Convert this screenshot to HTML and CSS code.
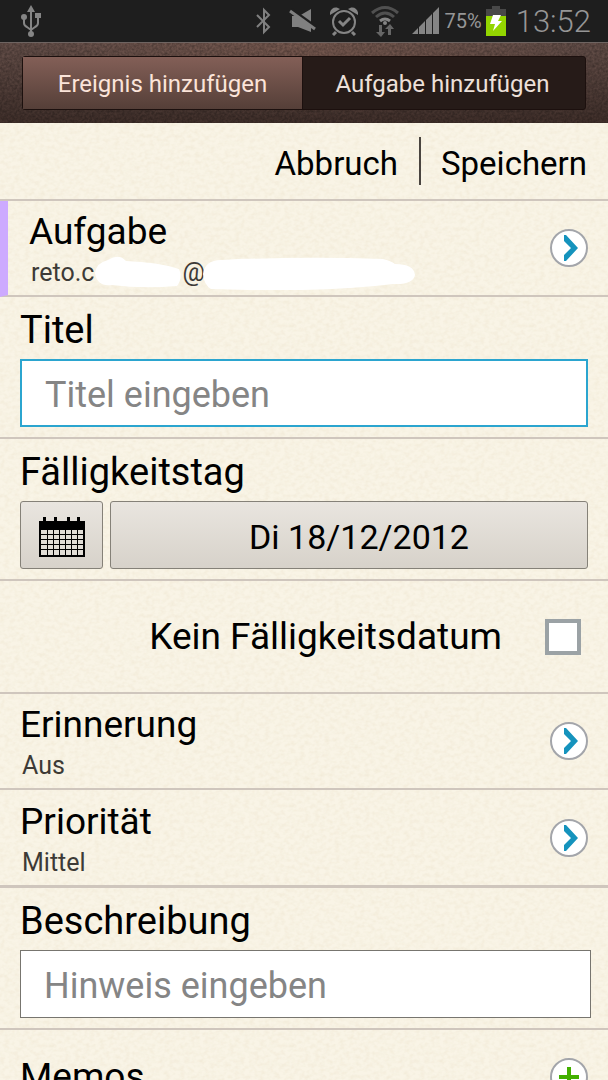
FILE: index.html
```html
<!DOCTYPE html>
<html lang="de">
<head>
<meta charset="utf-8">
<meta name="viewport" content="width=device-width, initial-scale=1">
<title>Aufgabe hinzufügen</title>
<link rel="stylesheet" href="styles.css">
</head>
<body>
<div class="screen">
  <div class="status">
    <svg width="24" height="34" viewBox="0 0 24 34" fill="none" stroke="#858585" stroke-width="2">
      <path d="M12 6v24M5 14v5c0 2 1 3 3 4l4 3M19 13v6c0 2-1 3-3 4l-4 3"/>
      <g fill="#858585" stroke="none"><path d="M12 1l4 7H8zM16 9h6v5h-6z"/><circle cx="5" cy="13" r="3"/><circle cx="12" cy="30" r="3"/></g>
    </svg>
    <div class="status-icons">
      <svg width="16" height="28" viewBox="0 0 16 28" fill="none" stroke="#808080" stroke-width="2"><path d="M1 8l12 12-5 5V3l5 5L1 20"/></svg>
      <svg width="28" height="26" viewBox="0 0 28 26"><path fill="#808080" d="M3 8h7l12-7v23L9 19H3z"/><path d="M2 1l25 18" stroke="#1e1e1e" stroke-width="3"/><path d="M1 3l25 18" stroke="#808080" stroke-width="3"/></svg>
      <svg width="28" height="30" viewBox="0 0 28 30" fill="none" stroke="#858585" stroke-width="2"><circle cx="14" cy="16" r="11"/><path stroke-width="3" d="M9 15l4 4 7-7"/><path stroke-width="3" d="M6 26l-3 3M22 26l3 3"/><path fill="#858585" stroke="none" d="M0 9C-1 3 5-1 10 3zM28 9c1-6-5-10-10-6z"/></svg>
      <svg width="28" height="32" viewBox="0 0 28 32" fill="none" stroke="#505050" stroke-width="3"><path d="M1 8Q14-3 27 8M5 12q9-8 18 0"/><path stroke="#858585" d="M9 16q5-4 10 0"/><circle cx="14" cy="18" r="2" fill="#858585" stroke="none"/><path fill="#666" stroke="none" d="M8 20h3v7h3l-4 5-5-5h3zM17 30h3v-6h3l-4-5-5 5h3z"/></svg>
      <svg class="signal" width="28" height="28" viewBox="0 0 28 28" fill="#858585"><path d="M0 27l6-6v6zM7 20l6-6v13H7zM14 13l6-6v20h-6zM21 6l6-6v27h-6z"/></svg>
      <span class="percent">75%</span>
      <svg width="20" height="30" viewBox="0 0 20 30"><path fill="#484848" d="M6 0h8v3h6v8H0V3h6z"/><path fill="#93d500" d="M0 10h20v20H0z"/><path fill="#fff" d="M7 9h8l-3 6h4L7 25l2-7H4z"/></svg>
      <time class="clock">13:52</time>
    </div>
  </div>

  <header class="topbar">
    <nav class="tabs">
      <button class="tab tab-raised" type="button">Ereignis hinzufügen</button>
      <button class="tab" type="button">Aufgabe hinzufügen</button>
    </nav>
  </header>

  <main class="form">
    <div class="actions">
      <button class="action" type="button">Abbruch</button>
      <button class="action" type="button">Speichern</button>
    </div>

    <section class="row account">
      <div class="texts">
        <h1 class="label">Aufgabe</h1>
        <p class="sub mail">reto.c<svg width="88" height="34" viewBox="0 0 88 34" fill="#fff"><path d="M1 17Q2 7 14 4 25-3 32 5 64 6 85 13q4 9-2 17-35 3-65-1Q3 31 1 17z"/></svg>@<svg class="blank-wide" width="212" height="34" viewBox="0 0 212 34" fill="#fff"><path d="M0 18Q2 4 18 4 100 0 180 3q8 2 12 5 19 0 20 11-2 10-22 9Q120 37 8 33 1 29 0 18z"/></svg></p>
      </div>
      <button class="round" type="button" aria-label="Konto wählen"><svg width="16" height="28" viewBox="0 0 16 28"><path fill="#1593bd" d="M1 1h2l12 13L3 27H1v-6l7-7-7-7z"/></svg></button>
    </section>

    <section class="field">
      <label class="label" for="title">Titel</label>
      <input class="input active" id="title" type="text" placeholder="Titel eingeben">
    </section>

    <section class="field">
      <h2 class="label">Fälligkeitstag</h2>
      <div class="date">
        <button class="button" type="button" aria-label="Kalender">
          <svg width="46" height="40" viewBox="0 0 46 40"><path d="M0 4h46v36H0zM4 0h3v5H4zM15 0h3v5h-3zM28 0h3v5h-3zM38 0h3v5h-3z"/><path fill="#e1ddd6" d="M2 13h42v25H2z"/><path stroke="#000" fill="none" d="M8.500 13v25M14.500 13v25M20.500 13v25M26.500 13v25M32.500 13v25M38.500 13v25M2 17.500h42M2 22.500h42M2 27.500h42M2 32.500h42"/></svg>
        </button>
        <button class="button day" type="button">Di 18/12/2012</button>
      </div>
    </section>

    <section class="nodate">
      <label class="label" for="nodate">Kein Fälligkeitsdatum</label>
      <input class="check" id="nodate" type="checkbox">
    </section>

    <section class="row">
      <div class="texts"><h2 class="label">Erinnerung</h2><p class="sub">Aus</p></div>
      <button class="round" type="button" aria-label="Erinnerung wählen"><svg width="16" height="28" viewBox="0 0 16 28"><path fill="#1593bd" d="M1 1h2l12 13L3 27H1v-6l7-7-7-7z"/></svg></button>
    </section>

    <section class="row last">
      <div class="texts"><h2 class="label">Priorität</h2><p class="sub">Mittel</p></div>
      <button class="round" type="button" aria-label="Priorität wählen"><svg width="16" height="28" viewBox="0 0 16 28"><path fill="#1593bd" d="M1 1h2l12 13L3 27H1v-6l7-7-7-7z"/></svg></button>
    </section>

    <section class="field note">
      <label class="label" for="note">Beschreibung</label>
      <input class="input" id="note" type="text" placeholder="Hinweis eingeben">
    </section>

    <section class="row">
      <h2 class="label">Memos</h2>
      <button class="round" type="button" aria-label="Memo hinzufügen"><svg width="20" height="20" viewBox="0 0 20 20"><path fill="#43b000" d="M8 0h4v8h8v4h-8v8H8v-8H0V8h8z"/></svg></button>
    </section>
  </main>
</div>
</body>
</html>
```
FILE: styles.css
```css
* {
  box-sizing: border-box;
}

body {
  margin: 0;
  font-family: Roboto, "Liberation Sans", sans-serif;
  color: #000;
}

button,
input {
  font: inherit;
  color: inherit;
}

h1,
h2,
p {
  margin: 0;
}

svg {
  display: block;
  flex: none;
}

.screen {
  display: flex;
  flex-direction: column;
  height: 100vh;
  overflow: hidden;
}

.status {
  display: flex;
  flex: none;
  align-items: center;
  justify-content: space-between;
  height: 42px;
  padding: 0 17px 0 19px;
  background: #1e1e1e;
  color: #969696;
}

.status-icons {
  display: flex;
  align-items: center;
  gap: 13px;
}

.status-icons svg:first-child {
  margin-right: 4px;
}

.signal {
  margin-right: -8px;
}

.percent {
  margin-right: -9px;
  font-size: 20px;
}

.clock {
  margin-left: -3px;
  font-size: 31px;
  font-weight: 300;
}

.topbar {
  flex: none;
  padding: 13px 22px;
  border-top: 1px solid #6e6461;
  background:
    url("data:image/svg+xml,%3Csvg xmlns='http://www.w3.org/2000/svg' width='200' height='80'%3E%3Cfilter id='n' x='0' y='0' width='100%25' height='100%25'%3E%3CfeTurbulence type='fractalNoise' baseFrequency='.4' numOctaves='2' stitchTiles='stitch'/%3E%3CfeColorMatrix values='0 0 0 0 0 0 0 0 0 0 0 0 0 0 0 .5 0 0 0 -.12'/%3E%3C/filter%3E%3Crect width='200' height='80' filter='url(%23n)'/%3E%3C/svg%3E"),
    radial-gradient(ellipse at 50% 0, #84605499, transparent 65%),
    linear-gradient(#66504a, #41302b);
}

.tabs {
  display: flex;
  height: 54px;
  border: 1px solid #1c100e;
  border-radius: 3px;
  background: #261b18;
}

.tab {
  flex: 1;
  padding: 2px 3px 0 0;
  border: 0;
  background: none;
  color: #ede0d9;
  font-size: 24px;
}

.tab-raised {
  padding-right: 0;
  border-right: 1px solid #1c100e;
  background: linear-gradient(#835f57, #553f38);
  color: #fbe4d9;
}

.form {
  flex: 1;
  min-height: 0;
  overflow-y: auto;
  scrollbar-width: none;
  background:
    url("data:image/svg+xml,%3Csvg xmlns='http://www.w3.org/2000/svg' width='240' height='240'%3E%3Cfilter id='n' x='0' y='0' width='100%25' height='100%25'%3E%3CfeTurbulence type='fractalNoise' baseFrequency='.2 .26' numOctaves='2' stitchTiles='stitch'/%3E%3CfeColorMatrix values='0 0 0 0 .7 0 0 0 0 .6 0 0 0 0 .4 .4 0 0 0 -.15'/%3E%3C/filter%3E%3Crect width='240' height='240' filter='url(%23n)'/%3E%3C/svg%3E"),
    #f9f4e6;
}

.actions {
  display: flex;
  align-items: center;
  justify-content: flex-end;
  height: 78px;
  border-bottom: 2px solid #cfc6bd;
}

.action {
  height: 48px;
  padding: 4px 21px 0;
  border: 0;
  background: none;
  font-size: 33px;
}

.action + .action {
  padding-left: 20px;
  border-left: 2px solid #4a4540;
}

.row {
  display: flex;
  align-items: center;
  justify-content: space-between;
  min-height: 96px;
  padding: 0 20px;
  border-bottom: 2px solid #cfc6bd;
}

.texts {
  padding-top: 6px;
}

.account {
  padding-left: 21px;
  border-left: 8px solid #cdaaff;
}

.last {
  min-height: 98px;
  border-bottom-width: 3px;
}

.label {
  display: block;
  font-size: 38px;
  font-weight: 400;
  line-height: 44px;
}

.row .label,
.nodate .label {
  font-size: 37px;
}

.sub {
  padding-left: 2px;
  color: #3d3a36;
  font-size: 25px;
  line-height: 38px;
}

.mail {
  display: flex;
  align-items: center;
}

.blank-wide {
  margin-left: -2px;
}

.round {
  display: flex;
  flex: none;
  align-items: center;
  justify-content: center;
  width: 38px;
  height: 38px;
  padding: 0 0 0 3px;
  border: 2px solid #a3a5aa;
  border-radius: 50%;
  background: #fff;
}

.row > .label + .round {
  padding: 0;
}

.field {
  padding: 11px 20px 10px;
  border-bottom: 2px solid #cfc6bd;
}

.note {
  padding-right: 17px;
}

.input {
  display: block;
  width: 100%;
  height: 68px;
  margin-top: 7px;
  padding: 4px 23px 0;
  border: 1px solid #77756f;
  border-radius: 0;
  background: #fff;
  font-size: 36px;
}

.input::placeholder {
  color: #858585;
  opacity: 1;
}

.active {
  border: 2px solid #2ba5cf;
}

.date {
  display: flex;
  gap: 7px;
  margin-top: 7px;
}

.button {
  display: flex;
  align-items: center;
  justify-content: center;
  width: 83px;
  height: 68px;
  padding: 4px 0 0;
  border: 1px solid #858178;
  border-radius: 3px;
  background: linear-gradient(#e9e5df, #d7d2ca);
}

.day {
  flex: 1;
  padding-left: 20px;
  font-size: 34px;
}

.nodate {
  display: flex;
  align-items: center;
  justify-content: flex-end;
  gap: 43px;
  height: 113px;
  padding: 0 27px;
  border-bottom: 2px solid #cfc6bd;
}

.check {
  appearance: none;
  width: 36px;
  height: 36px;
  margin: 0;
  border: 4px solid #9ba2a5;
  background: #fff;
}
```
